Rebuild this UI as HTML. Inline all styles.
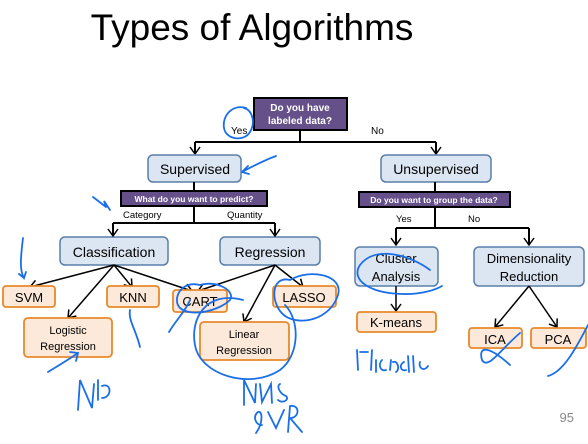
<!DOCTYPE html>
<html><head><meta charset="utf-8"><style>
html,body{margin:0;padding:0;background:#fff;width:588px;height:444px;overflow:hidden}
svg{display:block}
text{font-family:"Liberation Sans",sans-serif}
</style></head><body>
<svg width="588" height="444" viewBox="0 0 588 444" xmlns="http://www.w3.org/2000/svg">
<defs>
<marker id="b" markerWidth="12" markerHeight="12" refX="10" refY="6" orient="auto" markerUnits="userSpaceOnUse">
<path d="M3,1 L10,6 L3,11" fill="none" stroke="#000" stroke-width="1.5"/></marker>
</defs>
<text x="252" y="40" font-size="37" text-anchor="middle" fill="#000">Types of Algorithms</text>

<!-- top purple -->
<rect x="254" y="98" width="93" height="32" fill="#65508a" stroke="#000" stroke-width="2"/>
<text x="300" y="111" font-size="10" font-weight="bold" fill="#fff" text-anchor="middle">Do you have</text>
<text x="300" y="124" font-size="10" font-weight="bold" fill="#fff" text-anchor="middle">labeled data?</text>
<path d="M300,130 V142 M195,142 H436" stroke="#000" stroke-width="2" fill="none"/>
<path d="M195,142 V154" stroke="#000" stroke-width="2" marker-end="url(#b)"/>
<path d="M436,142 V154" stroke="#000" stroke-width="2" marker-end="url(#b)"/>
<text x="231" y="134" font-size="10">Yes</text>
<text x="371" y="134" font-size="10">No</text>

<!-- blue boxes -->
<g fill="#dce6f2" stroke="#5a7ea8" stroke-width="1.5">
<rect x="148" y="155" width="93" height="27" rx="5"/>
<rect x="381" y="155" width="110" height="27" rx="5"/>
<rect x="60" y="237" width="108" height="28" rx="5"/>
<rect x="220" y="237" width="100" height="28" rx="5"/>
<rect x="355" y="247" width="83" height="39" rx="5"/>
<rect x="474" y="247" width="110" height="39" rx="5"/>
</g>
<g font-size="14" text-anchor="middle" fill="#000">
<text x="195" y="174">Supervised</text>
<text x="436" y="174">Unsupervised</text>
<text x="114" y="257">Classification</text>
<text x="270" y="257">Regression</text>
<text x="396" y="263" font-size="13">Cluster</text>
<text x="396" y="281" font-size="13">Analysis</text>
<text x="529" y="263" font-size="13">Dimensionality</text>
<text x="529" y="281" font-size="13">Reduction</text>
</g>

<!-- predict -->
<path d="M194,182 V191" stroke="#000" stroke-width="2"/>
<rect x="121" y="191" width="146" height="15" fill="#65508a" stroke="#000" stroke-width="2"/>
<text x="194" y="202" font-size="8.5" font-weight="bold" fill="#fff" text-anchor="middle">What do you want to predict?</text>
<path d="M194,206 V223 M113,223 H275" stroke="#000" stroke-width="2" fill="none"/>
<path d="M113,223 V236" stroke="#000" stroke-width="2" marker-end="url(#b)"/>
<path d="M275,223 V236" stroke="#000" stroke-width="2" marker-end="url(#b)"/>
<text x="123" y="218" font-size="9.5">Category</text>
<text x="227" y="218" font-size="9.5">Quantity</text>

<!-- group -->
<path d="M435,182 V192" stroke="#000" stroke-width="2"/>
<rect x="359" y="192" width="151" height="15" fill="#65508a" stroke="#000" stroke-width="2"/>
<text x="434" y="203" font-size="8.5" font-weight="bold" fill="#fff" text-anchor="middle">Do you want to group the data?</text>
<path d="M435,207 V228 M396,228 H529" stroke="#000" stroke-width="2" fill="none"/>
<path d="M396,228 V245" stroke="#000" stroke-width="2" marker-end="url(#b)"/>
<path d="M529,228 V245" stroke="#000" stroke-width="2" marker-end="url(#b)"/>
<text x="396" y="222" font-size="9.5">Yes</text>
<text x="468" y="222" font-size="9.5">No</text>

<!-- arrows to leaves -->
<g stroke="#000" stroke-width="1.5" fill="none">
<path d="M114,265 L30,287" marker-end="url(#b)"/>
<path d="M114,265 L68,318" marker-end="url(#b)"/>
<path d="M114,265 L132,287" marker-end="url(#b)"/>
<path d="M114,265 L192,291" marker-end="url(#b)"/>
<path d="M275,265 L198,291" marker-end="url(#b)"/>
<path d="M275,265 L244,322" marker-end="url(#b)"/>
<path d="M275,265 L303,287" marker-end="url(#b)"/>
<path d="M396,286 L396,311" marker-end="url(#b)"/>
<path d="M529,286 L495,327" marker-end="url(#b)"/>
<path d="M529,286 L557,327" marker-end="url(#b)"/>
</g>

<!-- orange boxes -->
<g fill="#fde9d9" stroke="#e8892b" stroke-width="1.8">
<rect x="3" y="286" width="52" height="21" rx="3"/>
<rect x="107" y="286" width="52" height="21" rx="3"/>
<rect x="173" y="290" width="54" height="22" rx="3"/>
<rect x="273" y="286" width="63" height="21" rx="3"/>
<rect x="24" y="318" width="88" height="39" rx="4"/>
<rect x="200" y="322" width="89" height="38" rx="4"/>
<rect x="357" y="312" width="79" height="20" rx="3"/>
<rect x="469" y="328" width="53" height="20" rx="3"/>
<rect x="531" y="328" width="55" height="20" rx="3"/>
</g>
<g font-size="13" text-anchor="middle" fill="#000">
<text x="29" y="302">SVM</text>
<text x="133" y="302">KNN</text>
<text x="200" y="306">CART</text>
<text x="304" y="302">LASSO</text>
<text x="68" y="334" font-size="11">Logistic</text>
<text x="68" y="350" font-size="11">Regression</text>
<text x="244" y="338" font-size="11">Linear</text>
<text x="244" y="354" font-size="11">Regression</text>
<text x="396" y="327">K-means</text>
<text x="495" y="344">ICA</text>
<text x="558" y="344">PCA</text>
</g>
<text x="574" y="422" font-size="13" fill="#888" text-anchor="end">95</text>

<!-- handwriting -->
<g stroke="#1a6fe8" stroke-width="1.8" fill="none" stroke-linecap="round">
<path d="M246,108 C232,104 222,116 224,128 C226,140 244,142 250,132 C256,122 252,110 244,108"/>
<path d="M276,156 C265,160 255,165 242,172 M242,172 L248,166 M242,172 L249,174"/>
<path d="M93,197 L106,207 M106,207 L104,201 L110,210"/>
<path d="M23,238 C21,255 19,270 24,278 L26,272 M24,278 L19,274"/>
<path d="M78,410 L80,380 L92,408 L94,384 M98,380 L98,400 M102,386 C112,382 112,398 102,398"/>
<path d="M48,372 C56,367 68,360 78,353 M70,352 L78,353 L76,361"/>
<path d="M130,310 C128,320 136,330 140,347"/>
<path d="M169,332 C176,320 185,312 190,300"/>
<path d="M200,285 C180,280 172,300 180,308 C192,318 220,310 230,300 C236,290 215,280 200,285"/>
<path d="M243,300 C205,290 190,320 195,345 C200,375 250,390 280,370 C300,355 300,320 285,305"/>
<path d="M290,280 C270,275 270,305 285,316 C300,326 330,320 338,295 C344,275 310,268 290,280"/>
<path d="M244,405 L244,380 L255,403 L256,384 M260,384 L262,402 L271,384 L272,403 M280,384 C276,386 280,394 286,396 C290,400 282,404 278,400"/>
<path d="M262,425 C256,426 252,416 258,412 C262,410 264,422 256,433 M268,412 L276,428 L284,410 M288,432 L290,406 C300,404 300,418 290,418 L302,432"/>
<path d="M430,270 C410,255 375,245 360,265 C350,280 370,295 410,294 C425,293 435,290 442,286"/>
<path d="M358,370 L357,350 M360,352 L368,352 M372,350 L371,370 M376,360 L376,372 M382,360 C378,364 380,372 386,370 M390,370 L391,360 M393,362 C398,360 400,370 396,372 M404,362 C399,364 400,372 406,370 M408,356 L409,372 M413,356 L414,372 M420,362 C418,368 424,372 428,366"/>
<path d="M520,333 C500,350 488,370 482,360 C478,346 488,345 510,365"/>
<path d="M588,325 C575,350 563,372 548,376"/>
</g>
</svg>
</body></html>
